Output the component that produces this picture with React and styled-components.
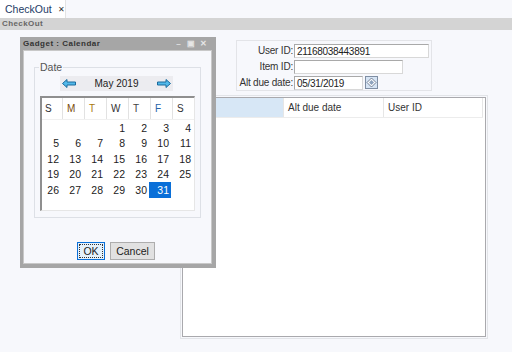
import React from 'react';
import styled, { createGlobalStyle } from 'styled-components';

const GlobalStyle = createGlobalStyle`
    html, body {
        margin: 0;
        padding: 0;
        background: #f7f8fc;
        font-family: "Liberation Sans", Arial, sans-serif;
        font-size: 10px;
        color: #333;
    }
`;

const Page = styled.div`
    position: relative;
    width: 512px;
    height: 352px;
    overflow: hidden;
    background: #f7f8fc;
`;

const TabStrip = styled.div`
    display: flex;
    height: 18px;
    background: #f7f8fc;
`;

const Tab = styled.div`
    display: flex;
    align-items: center;
    gap: 6px;
    width: 66px;
    box-sizing: border-box;
    padding-left: 5px;
    background: #fff;
    border-right: 1px solid #e3e3e3;
    font-size: 10.5px;
    color: #1d3b66;
`;

const TabClose = styled.span`
    font-size: 8px;
    color: #333;
`;

const SectionBar = styled.div`
    height: 12px;
    line-height: 12px;
    background: #d4d4d4;
    padding-left: 2px;
    font-size: 8px;
    font-weight: bold;
    letter-spacing: 0.4px;
    color: #666;
`;

const Content = styled.div`
    display: flex;
    flex-direction: column;
    padding-top: 10px;
`;

const FormPanel = styled.div`
    display: grid;
    grid-template-columns: 56px auto;
    row-gap: 1px;
    align-items: center;
    margin-left: 236px;
    width: 196px;
    height: 51px;
    box-sizing: border-box;
    padding: 2px 0 0 1px;
    border: 1px solid #e3e4e8;
`;

const Label = styled.label`
    text-align: right;
    padding-right: 1px;
    color: #333;
    letter-spacing: -0.2px;
    white-space: nowrap;
`;

const FieldRow = styled.div`
    display: flex;
    align-items: center;
    gap: 2px;
`;

const TextInput = styled.div`
    width: ${p => p.$w}px;
    height: 14px;
    line-height: 13px;
    box-sizing: border-box;
    padding-left: 2px;
    background: #fff;
    border: 1px solid #a9a9a9;
    border-right-color: #d8d8d8;
    border-bottom-color: #d8d8d8;
    font-size: 10px;
    letter-spacing: -0.3px;
    color: #222;
    overflow: hidden;
`;

const PickerButton = styled.div`
    display: flex;
    width: 13px;
    height: 13px;
`;

const GridOuter = styled.div`
    margin: 4px 0 0 180px;
    width: 308px;
    height: 244px;
    box-sizing: border-box;
    border: 1px solid #e2e4e8;
    padding: 1px;
`;

const GridInner = styled.div`
    height: 100%;
    box-sizing: border-box;
    background: #fff;
    border: 1px solid #a9a9ad;
    padding: 0 2px 0 1px;
`;

const GridHeader = styled.div`
    display: grid;
    grid-template-columns: 100px 100px 1fr;
    height: 19px;
    border-bottom: 1px solid #ececec;
`;

const HeaderCell = styled.div`
    display: flex;
    align-items: center;
    padding-left: 4px;
    background: ${p => (p.$active ? '#d7e7f6' : '#fff')};
    border-right: 1px solid #e6e6e6;
    color: #333;
`;

const Dialog = styled.div`
    position: absolute;
    left: 20px;
    top: 37px;
    width: 196px;
    height: 231px;
    box-sizing: border-box;
    display: flex;
    flex-direction: column;
    background: #a6a6a6;
    padding: 0 4px 4px 3px;
`;

const TitleBar = styled.div`
    display: flex;
    align-items: center;
    height: 13px;
    flex: none;
    padding-right: 2px;
    font-size: 8px;
    font-weight: bold;
    letter-spacing: 0.5px;
    color: #333;
`;

const TitleText = styled.span`
    flex: 1;
`;

const TitleButton = styled.span`
    width: 12.5px;
    text-align: center;
    font-size: 8px;
    color: #e6e6e6;
`;

const DialogBody = styled.div`
    flex: 1;
    display: flex;
    flex-direction: column;
    background: #f7f8fc;
    border: 1px solid #c8c8c8;
    padding: 10px 11px 0 10px;
`;

const Fieldset = styled.fieldset`
    margin: 0;
    padding: 3px 5px 4px 5px;
    border: 1px solid #dde0e6;
    height: 157px;
    box-sizing: border-box;
`;

const Legend = styled.legend`
    padding: 0 1px;
    margin-left: -1px;
    font-size: 10.5px;
    color: #555;
`;

const MonthNav = styled.div`
    display: flex;
    align-items: center;
    justify-content: space-between;
    margin-left: 20px;
    width: 113px;
    height: 15px;
    padding: 0 2px;
    box-sizing: border-box;
    background: #ececf0;
`;

const MonthLabel = styled.span`
    font-size: 10px;
    color: #222;
`;

const Calendar = styled.div`
    margin-top: 5px;
    width: 155px;
    height: 115px;
    box-sizing: border-box;
    overflow: hidden;
    background: #fff;
    border-top: 2px solid #8f8f8f;
    border-left: 2px solid #8f8f8f;
    border-right: 1px solid #e6e6e6;
    border-bottom: 1px solid #e6e6e6;
`;

const WeekRow = styled.div`
    display: grid;
    grid-template-columns: repeat(7, 22px);
    height: 21px;
    margin-left: -1px;
    border-bottom: 1px solid #f0f0f0;
`;

const WeekDay = styled.div`
    display: flex;
    align-items: center;
    padding-left: 4px;
    border-right: 1px solid #e2e2e2;
    color: ${p => p.$color};
`;

const Days = styled.div`
    display: grid;
    grid-template-columns: repeat(7, 22px);
    grid-auto-rows: 15.5px;
    margin-left: -3px;
`;

const Day = styled.div`
    display: flex;
    align-items: center;
    justify-content: flex-end;
    padding-right: 2px;
    font-size: 10.5px;
    color: ${p => (p.$selected ? '#fff' : '#222')};
    background: ${p => (p.$selected ? '#0a6fd8' : 'transparent')};
`;

const ButtonRow = styled.div`
    display: flex;
    justify-content: center;
    gap: 5px;
    margin-top: 24px;
    padding-right: 2px;
`;

const Button = styled.button`
    height: 18px;
    padding: 0;
    width: ${p => p.$w}px;
    font-family: "Liberation Sans", Arial, sans-serif;
    font-size: 10.5px;
    color: #222;
    background: ${p => (p.$primary ? '#e5f1fb' : '#e1e1e1')};
    border: 1px solid ${p => (p.$primary ? '#0a6fd8' : '#adadad')};
    outline: ${p => (p.$primary ? '1px dotted #333' : 'none')};
    outline-offset: -3px;
`;

const Arrow = ({ dir }) => (
    <svg width="14" height="9" viewBox="0 0 14 9">
        <polygon
            points={dir === 'left'
                ? '0.5,4.5 5,0.5 5,3 13.5,3 13.5,6 5,6 5,8.5'
                : '13.5,4.5 9,0.5 9,3 0.5,3 0.5,6 9,6 9,8.5'}
            fill="#52b9ea"
            stroke="#1b6a9c"
            strokeWidth="1"
        />
    </svg>
);

const PickerIcon = () => (
    <svg width="13" height="13" viewBox="0 0 13 13">
        <rect x="0.5" y="0.5" width="12" height="12" fill="#d6e4f4" stroke="#7f8ea3" />
        <polygon points="6.5,2 11,6.5 6.5,11 2,6.5" fill="#fff" stroke="#55657c" strokeWidth="0.8" />
        <polygon points="6.5,4 9,6.5 6.5,9 4,6.5" fill="#8da2bd" />
    </svg>
);

const weekDays = [
    ['S', '#333'],
    ['M', '#7a4b0a'],
    ['T', '#a87810'],
    ['W', '#333'],
    ['T', '#444'],
    ['F', '#2563a8'],
    ['S', '#333'],
];

const days = [];
for (let i = 0; i < 3; i++) days.push(null);
for (let d = 1; d <= 31; d++) days.push(d);

export default function App() {
    return (
        <Page>
            <GlobalStyle />
            <TabStrip>
                <Tab>CheckOut<TabClose>✕</TabClose></Tab>
            </TabStrip>
            <SectionBar>CheckOut</SectionBar>
            <Content>
                <FormPanel>
                    <Label>User ID:</Label>
                    <FieldRow><TextInput $w={135}>21168038443891</TextInput></FieldRow>
                    <Label>Item ID:</Label>
                    <FieldRow><TextInput $w={109} /></FieldRow>
                    <Label>Alt due date:</Label>
                    <FieldRow>
                        <TextInput $w={69}>05/31/2019</TextInput>
                        <PickerButton><PickerIcon /></PickerButton>
                    </FieldRow>
                </FormPanel>
                <GridOuter>
                    <GridInner>
                        <GridHeader>
                            <HeaderCell $active />
                            <HeaderCell>Alt due date</HeaderCell>
                            <HeaderCell>User ID</HeaderCell>
                        </GridHeader>
                    </GridInner>
                </GridOuter>
            </Content>

            <Dialog>
                <TitleBar>
                    <TitleText>Gadget : Calendar</TitleText>
                    <TitleButton>–</TitleButton>
                    <TitleButton>▣</TitleButton>
                    <TitleButton>✕</TitleButton>
                </TitleBar>
                <DialogBody>
                    <Fieldset>
                        <Legend>Date</Legend>
                        <MonthNav>
                            <Arrow dir="left" />
                            <MonthLabel>May 2019</MonthLabel>
                            <Arrow dir="right" />
                        </MonthNav>
                        <Calendar>
                            <WeekRow>
                                {weekDays.map(([d, c], i) => (
                                    <WeekDay key={i} $color={c}>{d}</WeekDay>
                                ))}
                            </WeekRow>
                            <Days>
                                {days.map((d, i) => (
                                    <Day key={i} $selected={d === 31}>{d}</Day>
                                ))}
                            </Days>
                        </Calendar>
                    </Fieldset>
                    <ButtonRow>
                        <Button $primary $w={28}>OK</Button>
                        <Button $w={45}>Cancel</Button>
                    </ButtonRow>
                </DialogBody>
            </Dialog>
        </Page>
    );
}
